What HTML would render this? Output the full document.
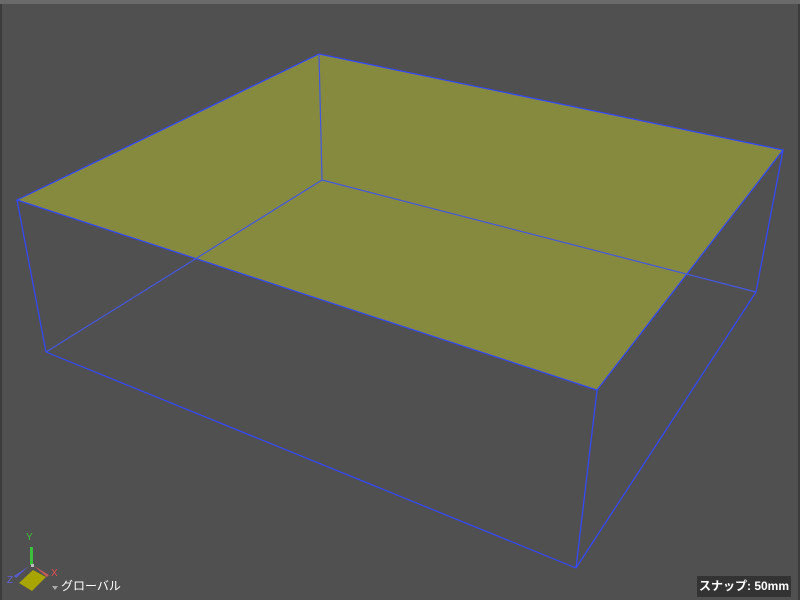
<!DOCTYPE html>
<html><head><meta charset="utf-8"><style>
html,body{margin:0;padding:0;width:800px;height:600px;overflow:hidden;background:#505050;}
.top{position:absolute;left:0;top:0;width:800px;height:4px;background:#6a6a6a;}
.lb{position:absolute;left:0;top:4px;width:2px;height:596px;background:#3c3c3c;}
.rb{position:absolute;right:0;top:4px;width:2px;height:596px;background:#3c3c3c;}
.snap{position:absolute;left:697px;top:576px;width:94px;height:21px;background:#333;color:#fff;font:bold 12px "Liberation Sans","Noto Sans CJK JP",sans-serif;line-height:21px;text-align:center;}
.gl{position:absolute;left:61px;top:577px;color:#fff;font:12px "Liberation Sans","Noto Sans CJK JP",sans-serif;}
</style></head><body>
<div class="top"></div><div class="lb"></div><div class="rb"></div>
<svg width="800" height="600" style="position:absolute;left:0;top:0">
<polygon points="17,200 319,54 783,150 597,390" fill="#868a3e"/>
<g stroke="#3448ff" stroke-width="1.2" fill="none">
<polygon points="17,200 319,54 783,150 597,390"/>
<line x1="319" y1="54" x2="322" y2="180" stroke="#4558e0"/>
<line x1="322" y1="180" x2="756" y2="292" stroke="#4558e0"/>
<line x1="322" y1="180" x2="46" y2="352" stroke="#4558e0"/>
<line x1="17" y1="200" x2="46" y2="352"/>
<line x1="783" y1="150" x2="756" y2="292"/>
<line x1="597" y1="390" x2="576" y2="568"/>
<line x1="46" y1="352" x2="576" y2="568"/>
<line x1="576" y1="568" x2="756" y2="292"/>
</g>
<polygon points="19,583 33,570 46,577 32,591" fill="#a8a400"/>
<polygon points="30,547 33,547 33,565 30,565" fill="#3cbf3c"/>
<polygon points="34,566 49,575 47,577" fill="#c85a5a"/>
<polygon points="29,566 14,576 16,578" fill="#5a5ad0"/>
<rect x="31" y="564" width="3" height="3" fill="#bbb"/>
<text x="26" y="540" fill="#3cbf3c" font-family="Liberation Sans" font-size="10">Y</text>
<text x="51" y="576" fill="#e05050" font-family="Liberation Sans" font-size="10">X</text>
<text x="7" y="583" fill="#6060e0" font-family="Liberation Sans" font-size="10">Z</text>
<polygon points="52,586 58,586 55,590" fill="#aaa"/>
</svg>
<div class="gl">グローバル</div>
<div class="snap">スナップ: 50mm</div>
</body></html>
